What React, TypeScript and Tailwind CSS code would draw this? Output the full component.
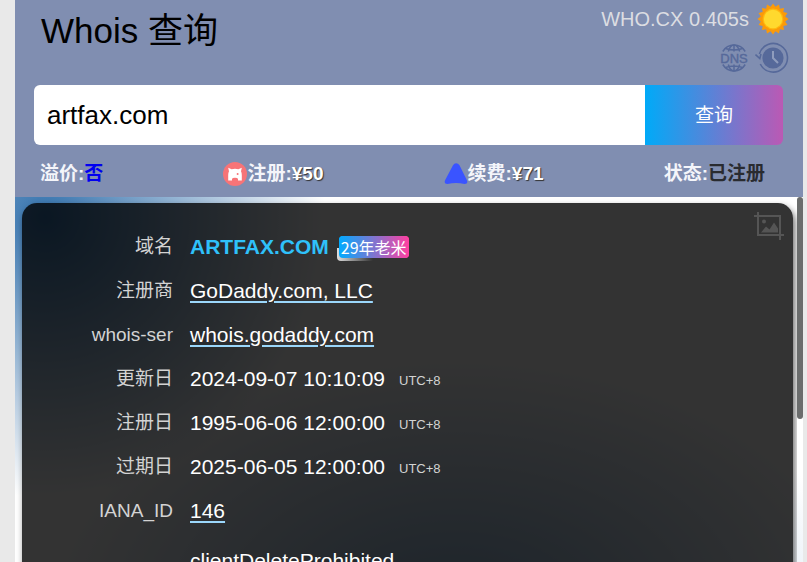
import type { ReactNode } from "react";

interface Row {
  label: string;
  value: ReactNode;
}

const SunIcon = () => {
  const points = Array.from({ length: 32 }, (_, i) => {
    const r = i % 2 === 0 ? 15.6 : 12.4;
    const a = (i * Math.PI) / 16;
    return `${16 + r * Math.sin(a)},${16 - r * Math.cos(a)}`;
  }).join(" ");
  return (
    <svg className="size-8" viewBox="0 0 32 32" aria-hidden="true">
      <polygon points={points} fill="#fb9a09" />
      <circle cx="16" cy="16" r="10.4" fill="#ffb80e" />
      <circle cx="16" cy="16" r="9.2" fill="#ffd92e" />
    </svg>
  );
};

const DnsIcon = () => (
  <svg className="h-[30px] w-[30px]" viewBox="0 0 30 30" fill="none" stroke="#56699a" strokeWidth="1.5">
    <path d="M3.8 8.5A13 13 0 0 1 26.2 8.5M3.8 21.5A13 13 0 0 0 26.2 21.5" />
    <path d="M9.3 8.5C10.4 4.800 12.500 2 15 2S19.600 4.800 20.700 8.500M9.300 21.500C10.400 25.200 12.500 28 15 28S19.600 25.200 20.700 21.500" />
    <path d="M15 2V8.500M15 21.500V28M6.500 5.500Q15 8.500 23.500 5.500M6.500 24.500Q15 21.500 23.500 24.500" />
    <text
      x="15"
      y="20"
      textAnchor="middle"
      fontSize="13"
      fontFamily="Liberation Sans, sans-serif"
      fill="#56699a"
      strokeWidth="0.4"
    >
      DNS
    </text>
  </svg>
);

const HistoryIcon = () => (
  <svg className="h-[32px] w-[34px]" viewBox="0 0 34 32" fill="none">
    <path d="M4.4 12A14.3 14.3 0 1 1 5.3 22" stroke="#56699a" strokeWidth="1.6" />
    <path d="M0.5 12.5L4.8 16.5L6 12" stroke="#56699a" strokeWidth="1.6" />
    <circle cx="18" cy="16" r="10.6" fill="#56699a" />
    <path d="M18 9V16L23 21" stroke="#8f9cbd" strokeWidth="2" />
  </svg>
);

const PigIcon = () => (
  <svg className="size-6" viewBox="0 0 24 24" aria-hidden="true">
    <circle cx="12" cy="12" r="12" fill="#f77477" />
    <path
      d="M5.2 5.8L8.6 7.2Q12 6.4 15.4 7.2L18.8 5.8L18 9.2Q18.800 11 18.800 13V18.600H15V17Q14.800 15.800 12 15.800T9 17V18.600H5.200V13Q5.200 11 6 9.200Z"
      fill="#fff"
    />
    <circle cx="14.6" cy="12" r="1" fill="#f77477" />
  </svg>
);

const ArrowIcon = () => (
  <svg className="size-6" viewBox="0 0 24 24" aria-hidden="true">
    <path
      d="M12.1 1.2Q14.2 1.2 15.5 3.2L22.8 18Q24.500 22 20.500 22Q12 19.800 3.500 22Q-0.500 22 1.200 18L9 3.200Q10.200 1.200 12.100 1.200Z"
      fill="#3a54ff"
    />
  </svg>
);

const ScreenshotIcon = () => (
  <svg className="h-[28px] w-[30px]" viewBox="0 0 30 28" fill="none" stroke="#555" strokeWidth="2">
    <path d="M0 4H26V28M4 0V23H30" />
    <path d="M7 20.500L12 14.500L15.500 17.500L20 10.500L24 16.500V20.500Z" fill="#555" stroke="none" />
    <circle cx="10" cy="9.5" r="2" fill="#555" stroke="none" />
  </svg>
);

const ValueLink = ({ children }: { children: ReactNode }) => (
  <a href="#" className="underline decoration-[#9bd7fb] decoration-2 underline-offset-[3px]">
    {children}
  </a>
);

const Time = ({ children }: { children: ReactNode }) => (
  <>
    {children}
    <span className="ml-3.5 align-[1px] text-[13px] text-[#d3d3d3]">UTC+8</span>
  </>
);

const rows: Row[] = [
  {
    label: "域名",
    value: (
      <div className="flex items-center gap-2.5">
        <strong className="text-[#2fc1fa]">ARTFAX.COM</strong>
        <span className="relative isolate rounded bg-linear-to-r/srgb from-[#0af] to-[#ff3fa0] px-0.5 font-['Noto_Sans_CJK_SC',sans-serif] text-base leading-[22px]">
          <span className="absolute top-3 -left-0.5 -z-20 h-[13px] w-9 rounded-bl bg-linear-to-r/srgb from-[#ddd] to-transparent" />
          <span className="absolute inset-0 -z-10 rounded bg-linear-to-r/srgb from-[#0af] to-[#ff3fa0]" />
          29年老米
        </span>
      </div>
    ),
  },
  { label: "注册商", value: <ValueLink>GoDaddy.com, LLC</ValueLink> },
  { label: "whois-ser", value: <ValueLink>whois.godaddy.com</ValueLink> },
  { label: "更新日", value: <Time>2024-09-07 10:10:09</Time> },
  { label: "注册日", value: <Time>1995-06-06 12:00:00</Time> },
  { label: "过期日", value: <Time>2025-06-05 12:00:00</Time> },
  { label: "IANA_ID", value: <ValueLink>146</ValueLink> },
];

const Header = () => (
  <header className="bg-[#808eb1] pr-5 pl-[19px]">
    <div className="flex h-[85px] justify-between">
      <h1 className="pt-2 pl-[7px] text-[35px] leading-[46px] text-black">Whois 查询</h1>
      <div className="flex flex-col items-end">
        <div className="-mr-1.5 flex items-center gap-2 pt-[3px] text-xl text-[#dcdde2]">
          WHO.CX 0.405s
          <button type="button" aria-label="Theme">
            <SunIcon />
          </button>
        </div>
        <div className="-mr-1.5 flex items-center gap-1.5 pt-[7px]">
          <button type="button" aria-label="DNS">
            <DnsIcon />
          </button>
          <button type="button" aria-label="History">
            <HistoryIcon />
          </button>
        </div>
      </div>
    </div>
    <form className="flex h-[60px]" onSubmit={(e) => e.preventDefault()}>
      <input
        className="min-w-0 flex-1 rounded-l-md bg-white px-[13px] text-[26px] text-black outline-none"
        type="text"
        aria-label="Domain"
        defaultValue="artfax.com"
      />
      <button
        type="submit"
        className="w-[138px] rounded-r-md bg-linear-to-r/srgb from-[#00aaf8] to-[#bb59b4] pt-0.5 text-[19px] text-white"
      >
        查询
      </button>
    </form>
    <div className="flex h-[52px] items-center justify-between pt-1.5 pr-[18px] pl-1.5 text-[19px] font-bold text-[#f4f5fa]">
      <div>
        溢价:<span className="text-[#0000f0]">否</span>
      </div>
      <div className="flex items-center">
        <PigIcon />
        注册:<span className="text-white [text-shadow:1px_1px_1px_#333]">¥50</span>
      </div>
      <div className="flex items-center">
        <ArrowIcon />
        续费:<span className="text-white [text-shadow:1px_1px_1px_#333]">¥71</span>
      </div>
      <div>
        状态:<span className="text-[#292b30]">已注册</span>
      </div>
    </div>
  </header>
);

export default function App() {
  return (
    <div className="h-screen overflow-hidden bg-[#e9e9e9] pr-1 pl-[15px] font-['Liberation_Sans','Noto_Sans_CJK_SC',sans-serif]">
      <div className="flex h-full flex-col">
        <Header />
        <main className="flex min-h-0 flex-1 bg-white bg-[radial-gradient(circle_at_30px_20px,#3573ae_0%,#fff_280px),radial-gradient(ellipse_410px_260px_at_56%_115%,#8cafd2_0%,#fff_100%)] bg-blend-multiply">
          <div className="min-w-0 flex-1 overflow-hidden pt-1.5 pr-1 pl-[7px]">
            <section className="relative rounded-[15px] bg-black/80 pt-[22px] text-[21px] text-white shadow-[2px_4px_7px_rgba(0,0,0,0.6)]">
              <button type="button" aria-label="Screenshot" className="absolute top-[9px] right-[9px]">
                <ScreenshotIcon />
              </button>
              <table className="w-full">
                <tbody>
                  {rows.map((row) => (
                    <tr key={row.label} className="h-11">
                      <th className="w-[151px] text-right text-[19px] font-normal text-[#d3d3d3]">{row.label}</th>
                      <td className="pl-[17px]">{row.value}</td>
                    </tr>
                  ))}
                  <tr className="h-[132px] align-top">
                    <th />
                    <td className="pt-3 pl-[17px]">clientDeleteProhibited</td>
                  </tr>
                </tbody>
              </table>
            </section>
          </div>
          {/* scrollbar */}
          <div className="w-1.5">
            <div className="h-[222px] rounded-full bg-[#6a6c6c]" />
          </div>
        </main>
      </div>
    </div>
  );
}
